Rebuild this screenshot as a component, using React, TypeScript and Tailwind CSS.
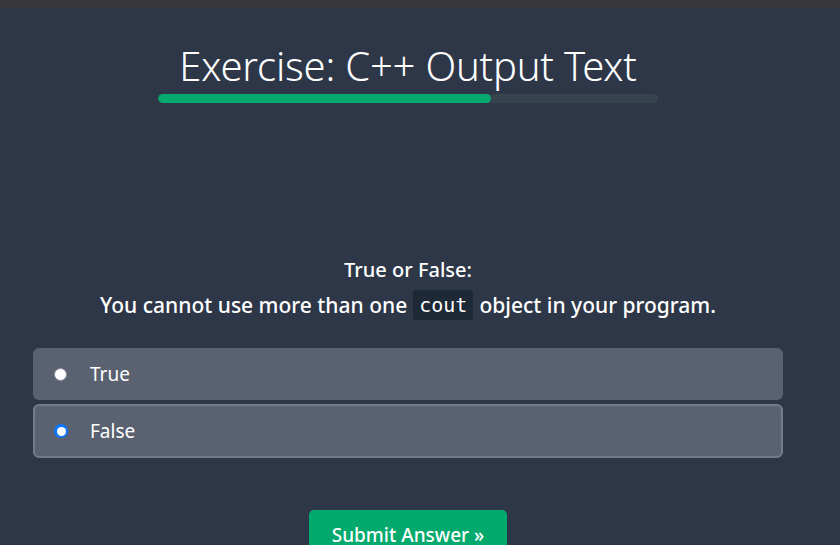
import React from "react"

export default function App() {
  return (
    <div className="w-[840px] h-[545px] overflow-hidden bg-[#2e3748] text-white" style={{ fontFamily: '"Source Sans Pro", "Noto Sans", sans-serif' }}>
      <div className="h-[8px] bg-[#38383d]" />
      <div className="w-[816px] flex flex-col items-center">
        <h1 className="mt-[35px] text-[40px] leading-[46px] font-light tracking-[-0.2px]">Exercise: C++ Output Text</h1>
        <div className="mt-[5px] w-[500px] h-[9px] rounded-full bg-[#38444d] overflow-hidden">
          <div className="h-full w-[333px] rounded-full bg-[#04aa6d]" />
        </div>
        <div className="mt-[154px] text-[20px] font-medium leading-[26px]">True or False:</div>
        <div className="mt-[7px] text-[21px] font-medium leading-[30px] flex items-center">
          <span>You cannot use more than one</span>
          <code className="mx-[6px] px-[6px] h-[30px] flex items-center bg-[#1d2a35] rounded-[3px] text-[20px] font-normal" style={{ fontFamily: '"DejaVu Sans Mono", monospace' }}>cout</code>
          <span>object in your program.</span>
        </div>
        <div className="mt-[28px] w-[750px] flex flex-col gap-[4px]">
          <label className="h-[52px] rounded-[6px] bg-[#5a6170] flex items-center pl-[21px] text-[19px]">
            <span className="w-[13px] h-[13px] rounded-full bg-white border border-[#8a8f99]" />
            <span className="ml-[23px]">True</span>
          </label>
          <label className="h-[54px] rounded-[6px] bg-[#5a6170] border-[2px] border-[#737a88] flex items-center pl-[19px] text-[19px]">
            <span className="w-[14px] h-[14px] rounded-full bg-[#0b76ff] flex items-center justify-center">
              <span className="w-[9px] h-[9px] rounded-full bg-white" />
            </span>
            <span className="ml-[22px]">False</span>
          </label>
        </div>
        <button className="mt-[52px] w-[198px] h-[44px] rounded-[5px] bg-[#04aa6d] text-white text-[19px] font-medium flex items-start justify-center pt-[11px]">
          Submit Answer »
        </button>
      </div>
    </div>
  )
}
